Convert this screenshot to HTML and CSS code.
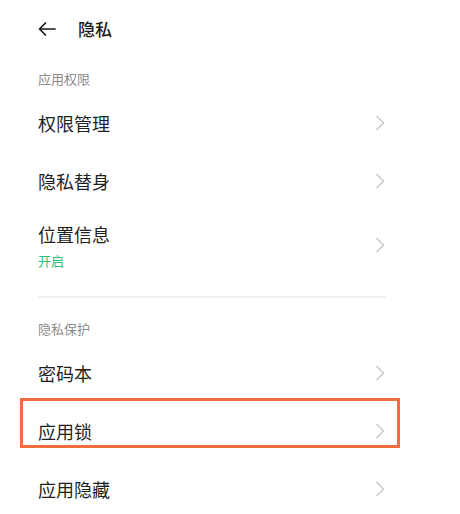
FILE: index.html
```html
<!DOCTYPE html>
<html lang="zh-CN">
<head>
    <meta charset="UTF-8">
    <meta name="viewport" content="width=device-width, initial-scale=1.0">
    <title>隐私</title>
    <link rel="stylesheet" href="styles.css">
</head>
<body>
    <div class="page">
        <div class="topbar">
            <svg class="back" width="18" height="14" viewBox="0 0 18 14">
                <path d="M17 7H1.5M7.5 1L1.5 7L7.5 13" fill="none" stroke="#1a1a1a" stroke-width="1.7" stroke-linecap="round" stroke-linejoin="round"/>
            </svg>
            <span class="title">隐私</span>
        </div>

        <div class="section-title">应用权限</div>
        <div class="row">
            <span class="label">权限管理</span>
            <svg class="chevron" width="10" height="16" viewBox="0 0 10 16"><path d="M1.5 1L8.5 8L1.5 15" fill="none" stroke="#c8c8c8" stroke-width="1.4"/></svg>
        </div>
        <div class="row">
            <span class="label">隐私替身</span>
            <svg class="chevron" width="10" height="16" viewBox="0 0 10 16"><path d="M1.5 1L8.5 8L1.5 15" fill="none" stroke="#c8c8c8" stroke-width="1.4"/></svg>
        </div>
        <div class="row row-tall">
            <div class="text">
                <span class="label">位置信息</span>
                <span class="sub">开启</span>
            </div>
            <svg class="chevron" width="10" height="16" viewBox="0 0 10 16"><path d="M1.5 1L8.5 8L1.5 15" fill="none" stroke="#c8c8c8" stroke-width="1.4"/></svg>
        </div>

        <div class="divider"></div>

        <div class="section-title">隐私保护</div>
        <div class="row">
            <span class="label">密码本</span>
            <svg class="chevron" width="10" height="16" viewBox="0 0 10 16"><path d="M1.5 1L8.5 8L1.5 15" fill="none" stroke="#c8c8c8" stroke-width="1.4"/></svg>
        </div>
        <div class="row marked">
            <span class="label">应用锁</span>
            <svg class="chevron" width="10" height="16" viewBox="0 0 10 16"><path d="M1.5 1L8.5 8L1.5 15" fill="none" stroke="#c8c8c8" stroke-width="1.4"/></svg>
            <div class="highlight"></div>
        </div>
        <div class="row">
            <span class="label">应用隐藏</span>
            <svg class="chevron" width="10" height="16" viewBox="0 0 10 16"><path d="M1.5 1L8.5 8L1.5 15" fill="none" stroke="#c8c8c8" stroke-width="1.4"/></svg>
        </div>
    </div>
</body>
</html>
```

FILE: styles.css
```css
body {
    margin: 0;
    padding: 0;
    background-color: #fff;
    color: #1f1f1f;
    font-family: "Noto Sans CJK SC", "Noto Sans", sans-serif;
    overflow: hidden;
}

.page {
    width: 348px;
    padding-left: 38px;
}

.topbar {
    height: 58px;
    display: flex;
    align-items: center;
    gap: 22px;
}

.back {
    display: block;
}

.title {
    font-size: 17px;
    font-weight: 500;
    line-height: 24px;
    color: #1a1a1a;
}

.section-title {
    font-size: 13px;
    line-height: 18px;
    color: #8c8c8c;
    padding: 12px 0 6px;
}

.row {
    position: relative;
    height: 58px;
    display: flex;
    align-items: center;
    justify-content: space-between;
}

.row-tall {
    height: 70px;
}

.text {
    display: flex;
    flex-direction: column;
    padding-top: 2px;
}

.label {
    font-size: 18px;
    line-height: 24px;
    color: #1f1f1f;
}

.sub {
    font-size: 13px;
    line-height: 18px;
    margin-top: 6px;
    color: #2fbf7c;
}

.chevron {
    display: block;
    margin-right: 1px;
}

.divider {
    height: 2px;
    background-color: #efefef;
    margin: 16px 0 10px;
}

/* annotation box drawn over the app lock row */
.highlight {
    position: absolute;
    left: -18px;
    top: -4px;
    width: 380px;
    height: 50px;
    border: 3px solid #f26d3d;
    box-sizing: border-box;
}
```
